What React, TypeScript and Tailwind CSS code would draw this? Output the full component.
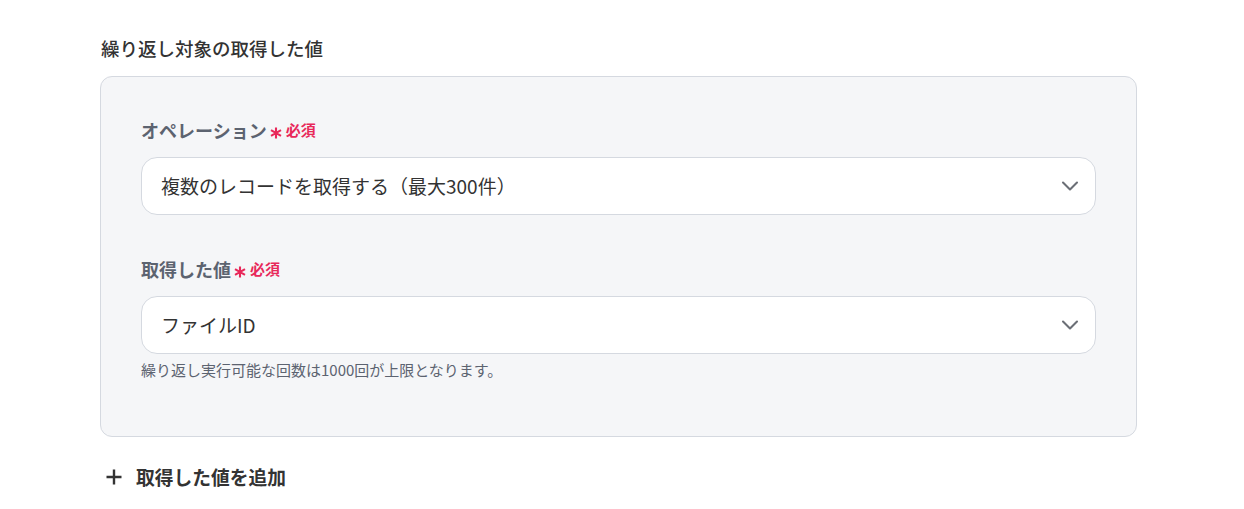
import React from "react";

const font = { fontFamily: '"Noto Sans CJK JP", "Noto Sans", sans-serif' };

function Chevron() {
  return (
    <svg width="28" height="28" viewBox="0 0 24 24" fill="none" stroke="#6b6f76" strokeWidth="1.8" strokeLinecap="round" strokeLinejoin="round">
      <path d="M6 9l6 6 6-6" />
    </svg>
  );
}

function Asterisk() {
  return (
    <svg width="12" height="12" viewBox="0 0 12 12" fill="none" stroke="#e8285a" strokeWidth="2.1" strokeLinecap="butt" className="mt-[5px]">
      <path d="M6 0.5v11M1 3.1l10 5.8M1 8.9l10-5.8" />
    </svg>
  );
}

function Label({ text }: { text: string }) {
  return (
    <div className="flex items-center h-[26px]">
      <span className="text-[18px] font-bold text-[#5c6370] leading-[26px] mr-[3px]">{text}</span>
      <Asterisk />
      <span className="text-[#e8285a] text-[15px] font-bold leading-[26px] ml-[4px]">必須</span>
    </div>
  );
}

function Select({ value }: { value: string }) {
  return (
    <div className="h-[58px] bg-white border border-[#d5d9e0] rounded-[16px] flex items-center justify-between pl-[19px] pr-[11px]">
      <span className="text-[19px] text-[#333333]">{value}</span>
      <Chevron />
    </div>
  );
}

export default function App() {
  return (
    <div className="w-[1244px] h-[509px] bg-white" style={font}>
      <div className="ml-[100px] w-[1037px] pt-[34px]">
        <div className="text-[18.5px] font-medium text-[#333333] leading-[28px] pl-[1px]">繰り返し対象の取得した値</div>
        <div className="mt-[14px] bg-[#f5f6f8] border border-[#d5d9e0] rounded-[12px] px-10 pt-10 pb-[56px]">
          <Label text="オペレーション" />
          <div className="mt-[14px]">
            <Select value="複数のレコードを取得する（最大300件）" />
          </div>
          <div className="mt-[41px]">
            <Label text="取得した値" />
          </div>
          <div className="mt-[14px]">
            <Select value="ファイルID" />
          </div>
          <div className="mt-[5px] text-[15px] leading-[21px] text-[#5c6370]">繰り返し実行可能な回数は1000回が上限となります。</div>
        </div>
        <div className="mt-[26px] flex items-center gap-[14px] pl-[6px]">
          <svg width="16" height="16" viewBox="0 0 16 16" fill="none" stroke="#333333" strokeWidth="2.4">
            <path d="M8 0.5v15M0.5 8h15" />
          </svg>
          <span className="text-[18.75px] font-bold text-[#333333] leading-[28px]">取得した値を追加</span>
        </div>
      </div>
    </div>
  );
}
